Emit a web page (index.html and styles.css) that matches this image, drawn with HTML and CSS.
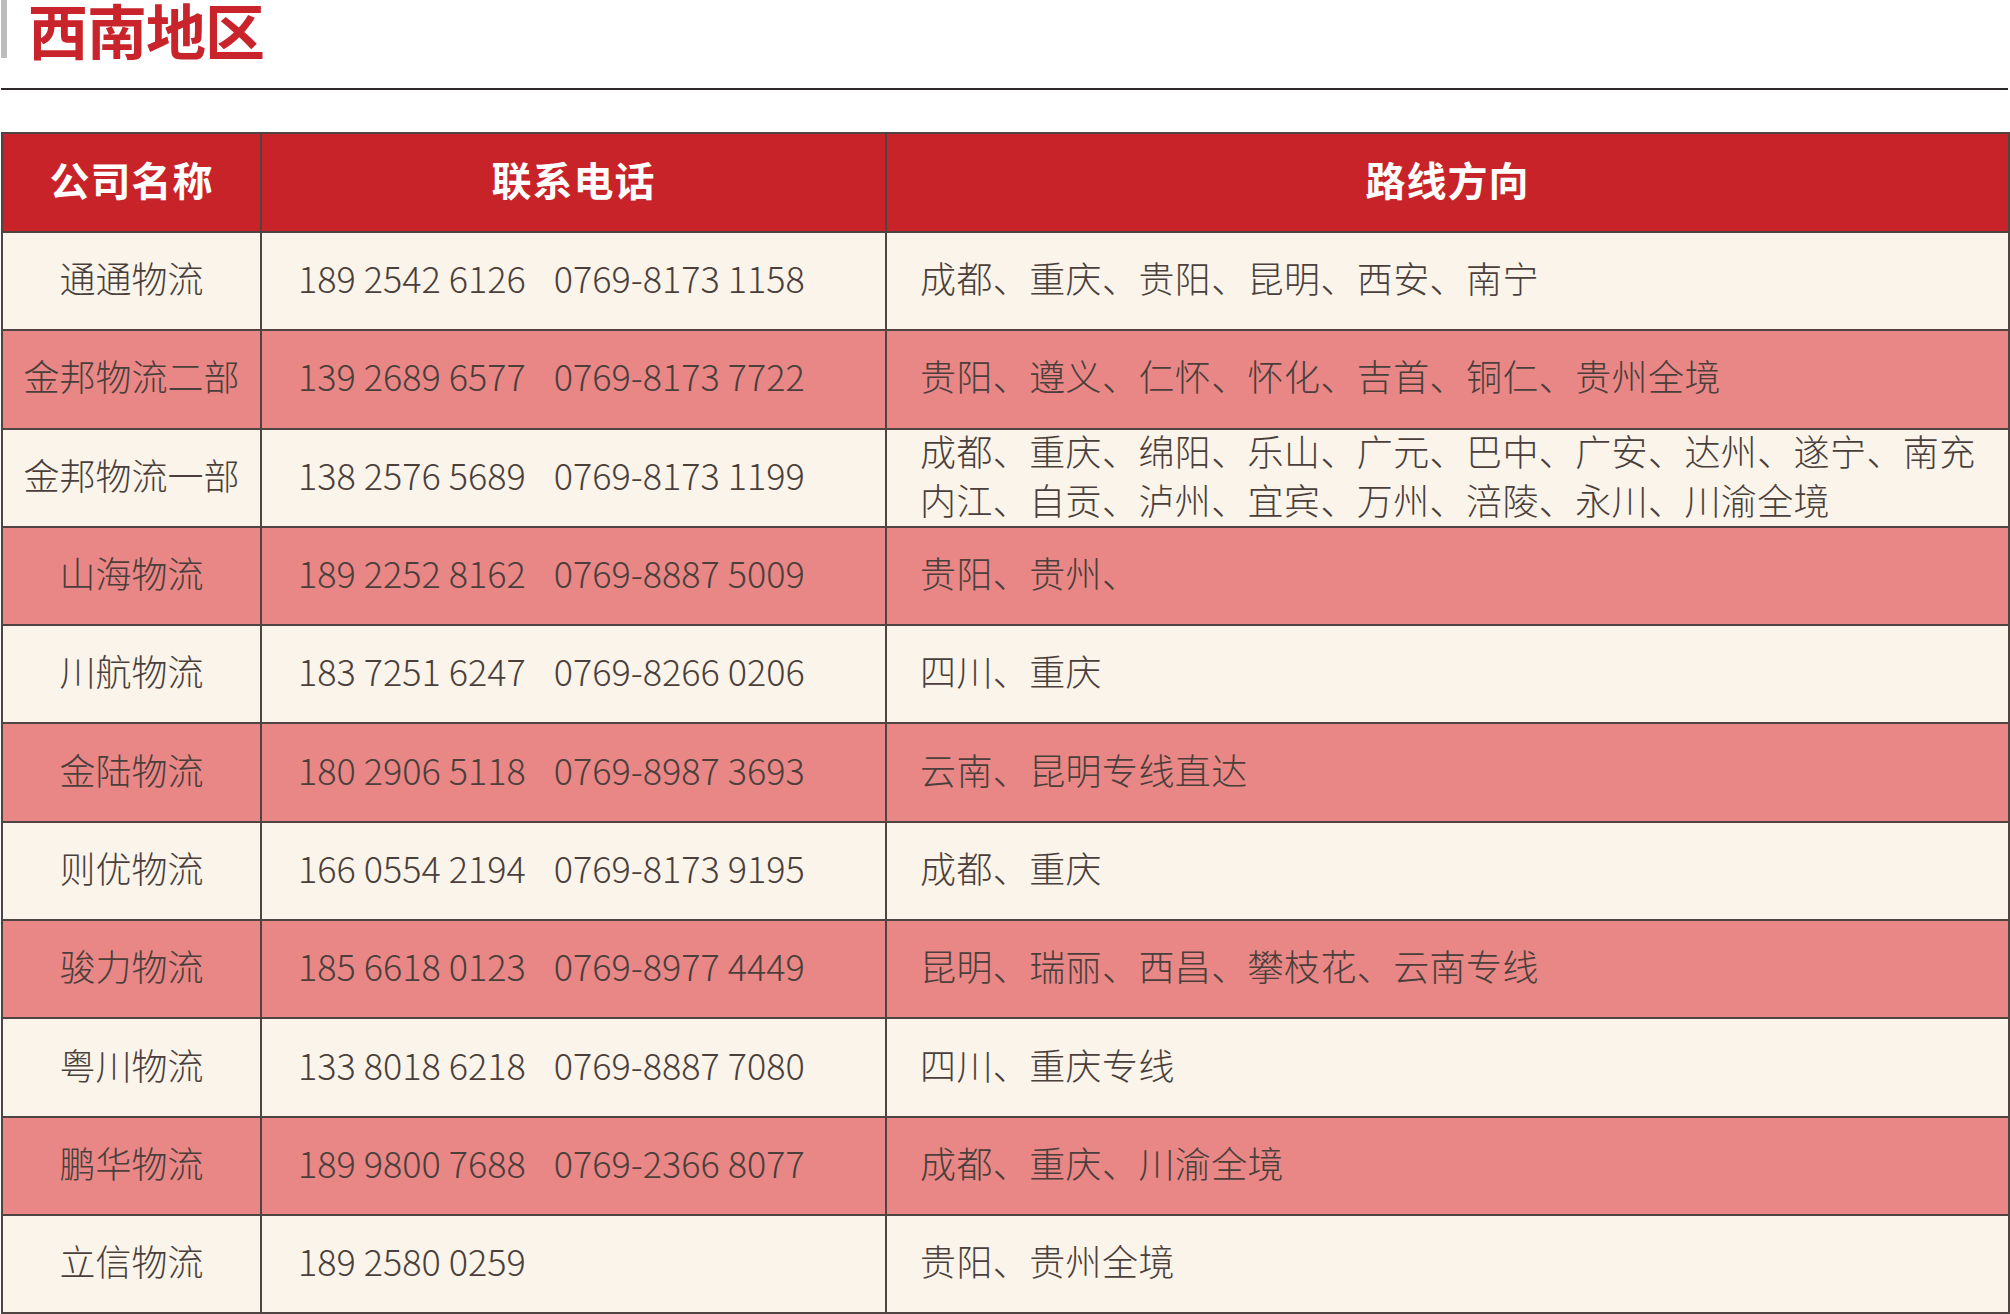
FILE: index.html
```html
<!DOCTYPE html>
<html lang="zh-CN">
<head>
<meta charset="utf-8">
<title>西南地区</title>
<link rel="stylesheet" href="styles.css">
</head>
<body>
<div class="page">
  <header class="section-head">
    <span class="bar"></span>
    <h1 class="title">西南地区</h1>
  </header>
  <div class="rule"></div>
  <table class="list">
    <colgroup>
      <col class="c-name">
      <col class="c-phone">
      <col class="c-route">
    </colgroup>
    <thead>
      <tr><th>公司名称</th><th>联系电话</th><th>路线方向</th></tr>
    </thead>
    <tbody>
      <tr class="odd"><td class="name">通通物流</td><td class="phone"><span class="mob">189 2542 6126</span><span class="tel">0769-8173 1158</span></td><td class="route">成都、重庆、贵阳、昆明、西安、南宁</td></tr>
      <tr class="even"><td class="name">金邦物流二部</td><td class="phone"><span class="mob">139 2689 6577</span><span class="tel">0769-8173 7722</span></td><td class="route">贵阳、遵义、仁怀、怀化、吉首、铜仁、贵州全境</td></tr>
      <tr class="odd"><td class="name">金邦物流一部</td><td class="phone"><span class="mob">138 2576 5689</span><span class="tel">0769-8173 1199</span></td><td class="route two"><div class="lines">成都、重庆、绵阳、乐山、广元、巴中、广安、达州、遂宁、南充<br>内江、自贡、泸州、宜宾、万州、涪陵、永川、川渝全境</div></td></tr>
      <tr class="even"><td class="name">山海物流</td><td class="phone"><span class="mob">189 2252 8162</span><span class="tel">0769-8887 5009</span></td><td class="route">贵阳、贵州、</td></tr>
      <tr class="odd"><td class="name">川航物流</td><td class="phone"><span class="mob">183 7251 6247</span><span class="tel">0769-8266 0206</span></td><td class="route">四川、重庆</td></tr>
      <tr class="even"><td class="name">金陆物流</td><td class="phone"><span class="mob">180 2906 5118</span><span class="tel">0769-8987 3693</span></td><td class="route">云南、昆明专线直达</td></tr>
      <tr class="odd"><td class="name">则优物流</td><td class="phone"><span class="mob">166 0554 2194</span><span class="tel">0769-8173 9195</span></td><td class="route">成都、重庆</td></tr>
      <tr class="even"><td class="name">骏力物流</td><td class="phone"><span class="mob">185 6618 0123</span><span class="tel">0769-8977 4449</span></td><td class="route">昆明、瑞丽、西昌、攀枝花、云南专线</td></tr>
      <tr class="odd"><td class="name">粤川物流</td><td class="phone"><span class="mob">133 8018 6218</span><span class="tel">0769-8887 7080</span></td><td class="route">四川、重庆专线</td></tr>
      <tr class="even"><td class="name">鹏华物流</td><td class="phone"><span class="mob">189 9800 7688</span><span class="tel">0769-2366 8077</span></td><td class="route">成都、重庆、川渝全境</td></tr>
      <tr class="odd"><td class="name">立信物流</td><td class="phone"><span class="mob">189 2580 0259</span></td><td class="route">贵阳、贵州全境</td></tr>
    </tbody>
  </table>
</div>
</body>
</html>
```

FILE: styles.css
```css
html, body {
  margin: 0;
  padding: 0;
  background: #ffffff;
}

body {
  font-family: "Noto Sans CJK SC", "Noto Sans", sans-serif;
  color: #4a3f3b;
}

.page {
  width: 2010px;
}

.section-head {
  display: flex;
  align-items: flex-start;
  height: 60px;
  padding-left: 1px;
}

.bar {
  display: block;
  width: 6px;
  height: 58px;
  background: #bdbdbd;
}

.title {
  margin: 0 0 0 21px;
  font-size: 60px;
  line-height: 58px;
  font-weight: 700;
  color: #c9232b;
  letter-spacing: -1px;
}

.rule {
  margin: 28px 0 0 1px;
  width: 2007px;
  height: 2px;
  background: #2f2a2a;
}

.list {
  margin-top: 42px;
  margin-left: 1px;
  width: 2007px;
  border-collapse: collapse;
  table-layout: fixed;
}

.c-name { width: 259px; }
.c-phone { width: 625px; }
.c-route { width: 1123px; }

.list th,
.list td {
  border: 2px solid #4f4441;
  padding: 0 0 7px 0;
  vertical-align: middle;
}

.list th {
  height: 90px;
  background: #c9232a;
  color: #ffffff;
  font-size: 40px;
  font-weight: 700;
  text-align: center;
  letter-spacing: 1px;
}

.list td {
  height: 89.3px;
  font-size: 36px;
  font-weight: 300;
  line-height: 49px;
}

.list tr.odd td { background: #faf4ea; }
.list tr.even td { background: #e98686; }

.name {
  text-align: center;
}

.list td.phone {
  padding-left: 36px;
  white-space: nowrap;
}

.mob {
  display: inline-block;
  margin-right: 28px;
}

.list td.route {
  padding-left: 33px;
  white-space: nowrap;
  letter-spacing: 0.4px;
}

.list td.route.two {
  padding-bottom: 0;
}

.lines {
  height: 95px;
  margin: -4px 0 4px 0;
  line-height: 49px;
}
```
